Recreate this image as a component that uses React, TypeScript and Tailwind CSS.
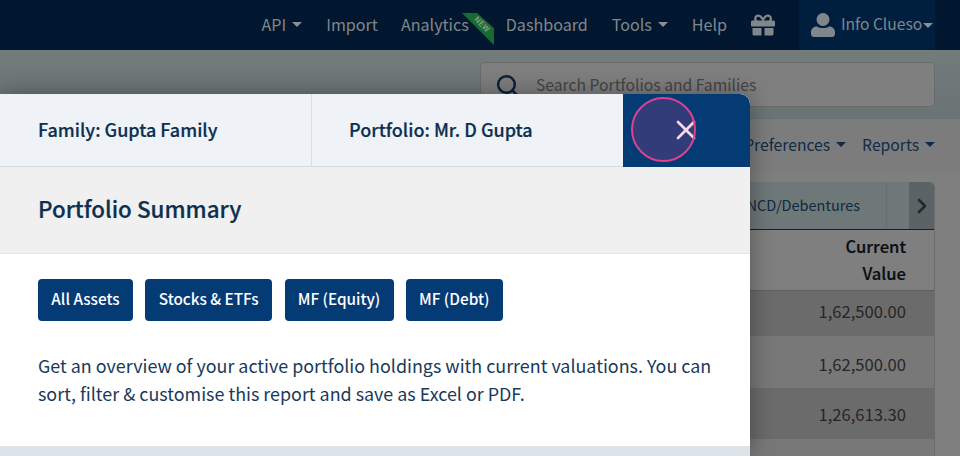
import { ChevronRight, Search, X } from "lucide-react";
import { FaGift } from "react-icons/fa";

const FONT = "font-['Noto_Sans_CJK_SC','Source_Sans_Pro',sans-serif]";
const SEMI = "font-medium [-webkit-text-stroke:0.2px]";

const Caret = ({ className = "ml-[6px] border-t-[#8a8f94]" }: { className?: string }) => (
  <span className={`inline-block h-0 w-0 border-x-[5px] border-t-[5px] border-x-transparent ${className}`} />
);

const NavItem = ({ label, caret, className = "" }: { label: string; caret?: boolean; className?: string }) => (
  <span className={`flex items-center pb-[2px] text-[16.100px] leading-none text-[#80878c] ${className}`}>
    {label}
    {caret && <Caret />}
  </span>
);

const TopBar = () => (
  <header className="flex h-[50px] items-stretch justify-end bg-[#00172f] pr-[25px]">
    <nav className="flex items-center gap-[24px] pr-[24px]">
      <NavItem label="API" caret />
      <NavItem label="Import" className="-mr-[1px]" />
      <span className="relative pr-[13px]">
        <NavItem label="Analytics" />
        <span className="absolute left-[61px] top-[-3px] h-[32px] w-[32px] bg-[#176b2e] [clip-path:polygon(0_0,15px_0,32px_15px,32px_32px)]">
          <span className="absolute left-[5px] top-[7px] block w-[30px] rotate-45 text-center text-[8px] font-bold leading-none text-[#7f9a85]">
            NEW
          </span>
        </span>
      </span>
      <NavItem label="Dashboard" />
      <NavItem label="Tools" caret />
      <NavItem label="Help" />
      <FaGift className="h-[24px] w-[24px] text-[#80878c]" />
    </nav>
    <div className="flex w-[136px] items-center bg-[#001f3f] pl-[12px]">
      <svg viewBox="0 0 24 24" className="mb-[1px] mr-[6px] h-[24px] w-[24px] shrink-0 fill-[#80878c]" aria-hidden="true">
        <circle cx="12" cy="6.500" r="6.500" />
        <path d="M0 21v-2c0-3.500 3-5.500 6-5.500 1.500 1 3.500 1.500 6 1.500s4.500-.5 6-1.500c3 0 6 2 6 5.500v2c0 1.500-1 3-3 3H3c-2 0-3-1.500-3-3z" />
      </svg>
      <span className="whitespace-nowrap pb-[2px] text-[15.600px] leading-none text-[#80878c]">Info Clueso</span>
      <Caret className="ml-[1px] border-t-[#8a8f94]" />
    </div>
  </header>
);

const rows = [
  { value: "1,62,500.00", cls: "h-[45px] pb-[4px] bg-[#6b6b6b]" },
  { value: "1,62,500.00", cls: "h-[52px] pt-[4px] bg-[#787878]" },
  { value: "1,26,613.30", cls: "h-[51px] pt-[2px] bg-[#6b6b6b]" },
];

const Background = () => (
  <div className="flex flex-col">
    <div className="h-[69px] border-b border-[#6a7272] bg-gradient-to-b from-[#737b7b] to-[#6a7474] pl-[480px] pr-[25px] pt-[12px]">
      <div className="flex h-[45px] items-center rounded-[5px] border border-[#6b6b6b] bg-[#7f7f7f] pl-[14px]">
        <Search className="mt-[2px] h-[25px] w-[25px] text-[#0c2238]" strokeWidth={2.4} />
        <span className="ml-[16px] text-[15.700px] leading-none text-[#454545]">Search Portfolios and Families</span>
      </div>
    </div>
    <div className="flex h-[52px] items-center justify-end gap-[16px] pr-[25px] text-[#112b44] bg-[#7c7c7c]">
      <span className="flex items-center text-[15.700px] leading-none">Preferences<Caret className="ml-[6px] border-t-[#112b44]" /></span>
      <span className="flex items-center text-[15.700px] leading-none">Reports<Caret className="ml-[6px] border-t-[#112b44]" /></span>
    </div>
    <div className="flex-1 bg-[#7f7f7f] pl-[480px] pr-[25px] pt-[11px]">
      <div className="h-[290px] rounded-t-[5px] border-r border-[#6b6b6b]">
        <div className="flex h-[48px] items-stretch justify-end rounded-t-[5px] border-b border-[#0c2238] bg-[#6e7878]">
          <span className="flex items-center border-r border-[#666f6f] pr-[26px] text-[14.500px] leading-none text-[#0f2a42]">NCD/Debentures</span>
          <span className="w-[22px]" />
          <span className="flex w-[25px] items-center justify-center rounded-tr-[5px] bg-[#5b6364]">
            <ChevronRight className="h-[24px] w-[24px] text-[#1f2a30]" strokeWidth={2.6} />
          </span>
        </div>
        <div className={`flex h-[61px] flex-col items-end justify-center border-b border-[#5f5f5f] pb-[1px] pr-[28px] text-[16.600px] leading-[27px] text-[#0a0f14] ${SEMI}`}>
          <span>Current</span>
          <span>Value</span>
        </div>
        {rows.map((row, i) => (
          <div
            key={i}
            className={`flex items-center justify-end pr-[28px] text-[16.600px] leading-none text-[#262626] ${row.cls}`}
          >
            {row.value}
          </div>
        ))}
        <div className="h-[20px] bg-[#787878]" />
      </div>
    </div>
  </div>
);

const buttons = [
  ["All Assets", "w-[95px]"],
  ["Stocks & ETFs", "w-[127px]"],
  ["MF (Equity)", "w-[109px]"],
  ["MF (Debt)", "w-[97px]"],
];

const Modal = () => (
  <section className="absolute left-0 top-[94px] flex h-[362px] w-[750px] flex-col overflow-hidden rounded-tr-[10px] bg-white shadow-[0_0_24px_rgba(0,0,0,0.35)]">
    <div className="flex h-[73px] border-b border-[#d9d9d9] bg-[#eff3f8]">
      <div className={`flex w-[312px] items-center border-r border-[#d9dde2] pb-[2px] pl-[38px] text-[18px] leading-none text-[#0d2f50] ${SEMI}`}>
        Family: Gupta Family
      </div>
      <div className={`flex w-[311px] items-center pb-[2px] pl-[37px] text-[18px] leading-none text-[#0d2f50] ${SEMI}`}>
        Portfolio: Mr. D Gupta
      </div>
      <div className="mb-[-1px] flex-1 bg-[#053b75]" />
    </div>
    <div className={`flex h-[87px] items-center border-b border-[#e6e6e6] bg-[#f0f0f0] pb-[3px] pl-[38px] text-[22.400px] leading-none text-[#0d2f50] ${SEMI}`}>
      Portfolio Summary
    </div>
    <div className="flex gap-x-[12.250px] pl-[38px] pt-[25px]">
      {buttons.map(([label, w]) => (
        <button
          key={label}
          className={`flex h-[42px] items-center justify-center rounded-[4px] bg-[#053b75] pb-[2px] text-[15.300px] font-medium leading-none text-white ${w}`}
        >
          {label}
        </button>
      ))}
    </div>
    <p className="pl-[38px] pr-[30px] pt-[30px] text-[17.900px] leading-[28px] text-[#19395a]">
      Get an overview of your active portfolio holdings with current valuations. You can sort, filter &amp; customise this report and save as Excel or PDF.
    </p>
    <div className="mt-auto h-[10px] bg-[#dce4ea]" />
  </section>
);

export default function App() {
  return (
    <div className={`relative h-[456px] w-[960px] overflow-hidden bg-[#7f7f7f] ${FONT}`}>
      <TopBar />
      <Background />
      <Modal />
      <X className="absolute left-[669.500px] top-[114px] h-[32px] w-[32px] text-white" strokeWidth={2} />
      <span className="absolute left-[631px] top-[97px] h-[65px] w-[65px] rounded-full border-2 border-[#e0408c] bg-[#e0408c]/20" />
    </div>
  );
}
